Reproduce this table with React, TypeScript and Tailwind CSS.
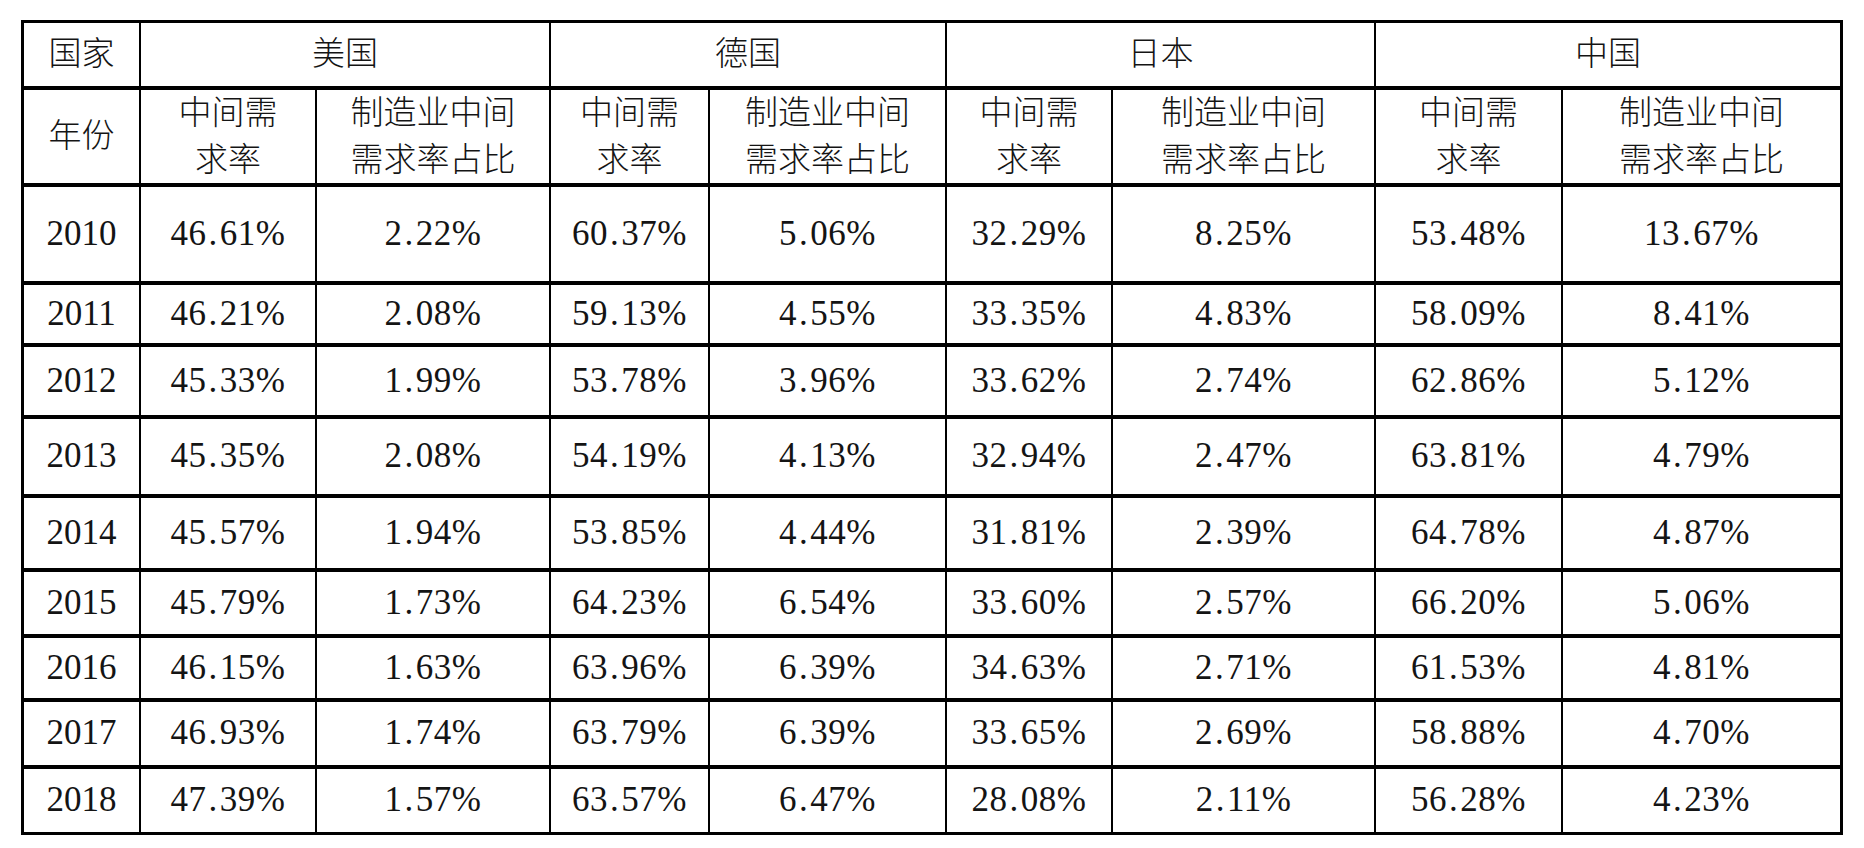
import React from 'react'

const countries = ['美国', '德国', '日本', '中国']

const rows = [
  { year: '2010', h: 'h-[94px]', v: ['46.61%', '2.22%', '60.37%', '5.06%', '32.29%', '8.25%', '53.48%', '13.67%'] },
  { year: '2011', h: 'h-[58px]', v: ['46.21%', '2.08%', '59.13%', '4.55%', '33.35%', '4.83%', '58.09%', '8.41%'] },
  { year: '2012', h: 'h-[68px]', v: ['45.33%', '1.99%', '53.78%', '3.96%', '33.62%', '2.74%', '62.86%', '5.12%'] },
  { year: '2013', h: 'h-[75px]', v: ['45.35%', '2.08%', '54.19%', '4.13%', '32.94%', '2.47%', '63.81%', '4.79%'] },
  { year: '2014', h: 'h-[70px]', v: ['45.57%', '1.94%', '53.85%', '4.44%', '31.81%', '2.39%', '64.78%', '4.87%'] },
  { year: '2015', h: 'h-[62px]', v: ['45.79%', '1.73%', '64.23%', '6.54%', '33.60%', '2.57%', '66.20%', '5.06%'] },
  { year: '2016', h: 'h-[60px]', v: ['46.15%', '1.63%', '63.96%', '6.39%', '34.63%', '2.71%', '61.53%', '4.81%'] },
  { year: '2017', h: 'h-[63px]', v: ['46.93%', '1.74%', '63.79%', '6.39%', '33.65%', '2.69%', '58.88%', '4.70%'] },
  { year: '2018', h: 'h-[63px]', v: ['47.39%', '1.57%', '63.57%', '6.47%', '28.08%', '2.11%', '56.28%', '4.23%'] },
]

const cell = 'flex items-center justify-center bg-white text-center'
const head = 'text-[33px] font-light'

// SimSun-style spacing round the decimal point
function Num({ value }: { value: string }) {
  const [a, b] = value.split('.')
  return (
    <span className="tracking-[0.5px]">
      {a}
      <span className="mx-[2px]">.</span>
      {b}
    </span>
  )
}

export default function App() {
  return (
    <div className="min-h-screen w-[1864px] bg-white pl-[21px] pt-[20px] font-['Liberation_Serif','Noto_Sans_CJK_SC',serif] text-[35px] text-[#141414]">
      <div className="grid w-[1822px] grid-cols-[115px_174px_232px_157px_235px_164px_261px_185px_277px] gap-x-[2px] gap-y-[4px] bg-black p-[3px]">
        {/* Header: countries */}
        <div className={`${cell} ${head} h-[63px]`}>国家</div>
        {countries.map((c) => (
          <div key={c} className={`${cell} ${head} col-span-2 h-[63px]`}>
            {c}
          </div>
        ))}

        {/* Header: metrics */}
        <div className={`${cell} ${head} h-[93px]`}>年份</div>
        {countries.map((c) => (
          <React.Fragment key={c}>
            <div className={`${cell} ${head} h-[93px] leading-[47px]`}>
              中间需
              <br />
              求率
            </div>
            <div className={`${cell} ${head} h-[93px] leading-[47px]`}>
              制造业中间
              <br />
              需求率占比
            </div>
          </React.Fragment>
        ))}

        {/* Data */}
        {rows.map((r) => (
          <React.Fragment key={r.year}>
            <div className={`${cell} ${r.h}`}>{r.year}</div>
            {r.v.map((x, i) => (
              <div key={i} className={`${cell} ${r.h}`}>
                <Num value={x} />
              </div>
            ))}
          </React.Fragment>
        ))}
      </div>
    </div>
  )
}
